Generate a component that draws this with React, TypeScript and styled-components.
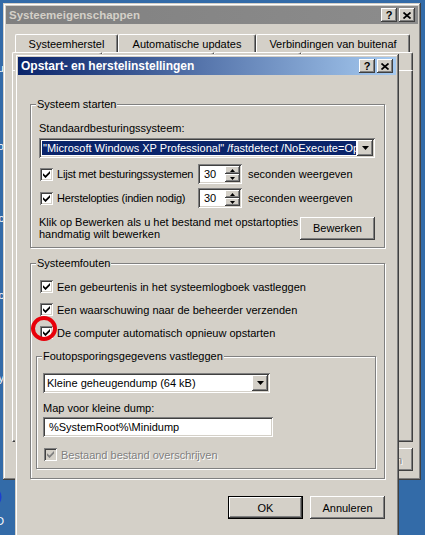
import styled, { createGlobalStyle } from "styled-components";

const FACE = "#d4d0c8";
const SHADOW = "#808080";
const DARK = "#404040";
const NAVY = "#0a246a";

const raised = `
  box-shadow: inset -1px -1px ${DARK}, inset 1px 1px #fff,
    inset -2px -2px ${SHADOW}, inset 2px 2px ${FACE};
`;

const sunken = `
  box-shadow: inset 1px 1px ${SHADOW}, inset -1px -1px #fff,
    inset 2px 2px ${DARK}, inset -2px -2px ${FACE};
`;

const GlobalStyle = createGlobalStyle`
  html, body {
    margin: 0;
    padding: 0;
    background: #336ba8;
  }
  body {
    font-family: "Liberation Sans", Arial, sans-serif;
    font-size: 11px;
    color: #000;
  }
  * {
    box-sizing: border-box;
  }
`;

const Desktop = styled.div`
  position: relative;
  width: 425px;
  height: 535px;
  overflow: hidden;
  background: #336ba8;
`;

// bits of desktop icon captions peeking out at the left edge
const DesktopLabel = styled.span<{ $top: number }>`
  position: absolute;
  right: 421px;
  top: ${(p) => p.$top}px;
  color: #fff;
  white-space: nowrap;
  line-height: 13px;
`;

const DesktopIcon = styled.svg`
  position: absolute;
  left: -21px;
  top: 485px;
`;

const Window = styled.div<{ $x: number; $y: number; $w: number; $h: number }>`
  position: absolute;
  left: ${(p) => p.$x}px;
  top: ${(p) => p.$y}px;
  width: ${(p) => p.$w}px;
  height: ${(p) => p.$h}px;
  display: flex;
  flex-direction: column;
  padding: 3px;
  background: ${FACE};
  box-shadow: inset -1px -1px ${DARK}, inset 1px 1px ${FACE},
    inset -2px -2px ${SHADOW}, inset 2px 2px #fff;
`;

const TitleBar = styled.div<{ $active?: boolean }>`
  height: 18px;
  flex: none;
  display: flex;
  align-items: center;
  justify-content: space-between;
  padding: 0 3px 0 3px;
  background: ${(p) =>
    p.$active
      ? `linear-gradient(to right, ${NAVY}, #a6caf0)`
      : "linear-gradient(to right, #808080, #8c8c8c)"};
  color: ${(p) => (p.$active ? "#fff" : FACE)};
  font-size: ${(p) => (p.$active ? 12 : 11.5)}px;
  font-weight: bold;
  white-space: nowrap;
`;

const CaptionButtons = styled.div`
  display: flex;
  gap: 2px;
`;

const CaptionButton = styled.span`
  width: 16px;
  height: 14px;
  display: flex;
  align-items: center;
  justify-content: center;
  background: ${FACE};
  ${raised}
  color: #000;
  font-size: 11px;
  font-weight: bold;
  line-height: 14px;
`;

/* ---------- property sheet behind ---------- */

const SheetBody = styled.div`
  flex: 1;
  display: flex;
  flex-direction: column;
  padding: 10px 5px 6px 6px;
`;

const TabRow = styled.div<{ $indent: number }>`
  display: flex;
  height: 18px;
  flex: none;
  padding-left: ${(p) => p.$indent}px;
`;

const Tab = styled.div<{ $w: number }>`
  width: ${(p) => p.$w}px;
  flex: none;
  display: flex;
  align-items: center;
  justify-content: center;
  padding-top: 1px;
  border-left: 1px solid #fff;
  border-top: 1px solid #fff;
  border-right: 1px solid ${DARK};
  border-radius: 2px 2px 0 0;
  box-shadow: inset -1px 0 ${SHADOW};
  white-space: nowrap;
`;

const TabPanel = styled.div`
  flex: 1;
  border-left: 1px solid #fff;
  border-top: 1px solid #fff;
  border-right: 1px solid ${DARK};
  border-bottom: 1px solid ${DARK};
  box-shadow: inset -1px -1px ${SHADOW};
`;

const ButtonRow = styled.div<{ $mt: number; $gap: number }>`
  display: flex;
  justify-content: flex-end;
  gap: ${(p) => p.$gap}px;
  margin-top: ${(p) => p.$mt}px;
  flex: none;
`;

const PushButton = styled.button<{ $default?: boolean; $disabled?: boolean }>`
  width: 75px;
  height: 23px;
  flex: none;
  padding: 0;
  font: inherit;
  background: ${FACE};
  color: ${(p) => (p.$disabled ? SHADOW : "#000")};
  text-shadow: ${(p) => (p.$disabled ? "1px 1px #fff" : "none")};
  border: ${(p) => (p.$default ? "1px solid #000" : "none")};
  ${(p) =>
    p.$default
      ? `box-shadow: inset -1px -1px ${DARK}, inset 1px 1px #fff, inset -2px -2px ${SHADOW};`
      : raised}
`;

/* ---------- dialog ---------- */

const DialogBody = styled.div`
  flex: 1;
  display: flex;
  flex-direction: column;
  padding: 0 11px 0 12px;
`;

const Group = styled.fieldset<{ $mt: number }>`
  margin: ${(p) => p.$mt}px 0 0;
  padding: 0;
  min-width: 0;
  border: 1px solid ${SHADOW};
  box-shadow: inset 1px 1px #fff, 1px 1px #fff;
`;

const GroupLabel = styled.legend`
  margin-left: 5px;
  padding: 0 1px;
  line-height: 13px;
  background: ${FACE};
`;

const GroupInner = styled.div<{ $pad: string }>`
  display: flex;
  flex-direction: column;
  padding: ${(p) => p.$pad};
`;

const FieldLabel = styled.div<{ $mt?: number }>`
  line-height: 13px;
  margin-top: ${(p) => p.$mt ?? 0}px;
  white-space: nowrap;
`;

const ComboBox = styled.div<{ $w: number; $mt?: number }>`
  width: ${(p) => p.$w}px;
  height: 20px;
  margin-top: ${(p) => p.$mt ?? 0}px;
  display: flex;
  align-items: center;
  padding: 2px;
  background: #fff;
  ${sunken}
`;

const ComboText = styled.div<{ $selected?: boolean }>`
  flex: 1;
  min-width: 0;
  height: 14px;
  margin: 1px;
  padding-left: 1px;
  line-height: 14px;
  white-space: nowrap;
  overflow: hidden;
  background: ${(p) => (p.$selected ? NAVY : "transparent")};
  color: ${(p) => (p.$selected ? "#fff" : "#000")};
`;

const DropButton = styled.span`
  width: 16px;
  height: 16px;
  flex: none;
  display: flex;
  align-items: center;
  justify-content: center;
  background: ${FACE};
  ${raised}
`;

const TextBox = styled.div<{ $w: number; $mt?: number }>`
  width: ${(p) => p.$w}px;
  height: 20px;
  margin-top: ${(p) => p.$mt ?? 0}px;
  padding: 0 6px;
  line-height: 20px;
  background: #fff;
  white-space: nowrap;
  ${sunken}
`;

const TimerGrid = styled.div`
  display: grid;
  grid-template-columns: 159px 44px auto;
  row-gap: 4px;
  align-items: center;
  margin-top: 6px;
`;

const SpinBox = styled.div`
  width: 44px;
  height: 20px;
  display: flex;
  padding: 2px;
  background: #fff;
  ${sunken}
`;

const SpinValue = styled.span`
  flex: 1;
  padding-left: 4px;
  line-height: 16px;
`;

const SpinButtons = styled.div`
  width: 15px;
  display: flex;
  flex-direction: column;
`;

const SpinButton = styled.span`
  flex: 1;
  display: flex;
  align-items: center;
  justify-content: center;
  background: ${FACE};
  ${raised}
`;

const After = styled.span`
  margin-left: 6px;
  white-space: nowrap;
`;

const CheckList = styled.div<{ $ml: number; $pt: number }>`
  display: flex;
  flex-direction: column;
  gap: 10px;
  margin-left: ${(p) => p.$ml}px;
  padding-top: ${(p) => p.$pt}px;
`;

const CheckRow = styled.label<{ $mt?: number; $disabled?: boolean; $tight?: boolean }>`
  display: flex;
  align-items: center;
  gap: 4px;
  height: 13px;
  padding-left: 1px;
  margin-top: ${(p) => p.$mt ?? 0}px;
  white-space: nowrap;
  letter-spacing: ${(p) => (p.$tight ? "-0.2px" : "normal")};
  color: ${(p) => (p.$disabled ? SHADOW : "#000")};
  text-shadow: ${(p) => (p.$disabled ? "1px 1px #fff" : "none")};
`;

const CheckBox = styled.span<{ $disabled?: boolean }>`
  position: relative;
  width: 13px;
  height: 13px;
  flex: none;
  display: flex;
  align-items: center;
  justify-content: center;
  background: ${(p) => (p.$disabled ? FACE : "#fff")};
  ${sunken}
`;

// hand-drawn red marker around the checkbox
const Ring = styled.span`
  position: absolute;
  left: -9px;
  top: -10px;
  width: 26px;
  height: 25px;
  border: 4px solid #e8000a;
  border-radius: 50%;
`;

const EditRow = styled.div`
  display: flex;
  align-items: center;
  justify-content: space-between;
  margin-top: 8px;
`;

const Hint = styled.div`
  line-height: 12px;
`;

function CloseGlyph() {
  return (
    <svg width="8" height="7" viewBox="0 0 8 7">
      <path d="M0.5 0.5 L7.5 6.5 M7.5 0.5 L0.5 6.5" stroke="#000" strokeWidth="1.7" />
    </svg>
  );
}

function Caption({ title, active }: { title: string; active?: boolean }) {
  return (
    <TitleBar $active={active}>
      <span>{title}</span>
      <CaptionButtons>
        <CaptionButton>?</CaptionButton>
        <CaptionButton>
          <CloseGlyph />
        </CaptionButton>
      </CaptionButtons>
    </TitleBar>
  );
}

function Check({ disabled }: { disabled?: boolean }) {
  return (
    <svg width="7" height="7" viewBox="0 0 7 7">
      <polygon points="0,2.2 2.5,4.6 7,0.1 7,2.6 2.5,7.1 0,4.6" fill={disabled ? SHADOW : "#000"} />
    </svg>
  );
}

function DownArrow() {
  return (
    <svg width="7" height="4" viewBox="0 0 7 4">
      <polygon points="0,0 7,0 3.5,4" fill="#000" />
    </svg>
  );
}

function Spin({ value }: { value: string }) {
  return (
    <SpinBox>
      <SpinValue>{value}</SpinValue>
      <SpinButtons>
        <SpinButton>
          <svg width="5" height="3" viewBox="0 0 5 3">
            <polygon points="0,3 5,3 2.5,0" fill="#000" />
          </svg>
        </SpinButton>
        <SpinButton>
          <svg width="5" height="3" viewBox="0 0 5 3">
            <polygon points="0,0 5,0 2.5,3" fill="#000" />
          </svg>
        </SpinButton>
      </SpinButtons>
    </SpinBox>
  );
}

export default function App() {
  return (
    <Desktop>
      <GlobalStyle />
      <DesktopLabel $top={62}>Menu</DesktopLabel>
      <DesktopLabel $top={140}>Deco</DesktopLabel>
      <DesktopLabel $top={212}>Doc</DesktopLabel>
      <DesktopLabel $top={289}>Muzc</DesktopLabel>
      <DesktopLabel $top={372}>Spy</DesktopLabel>
      <DesktopLabel $top={515}>GO</DesktopLabel>
      <DesktopIcon width="24" height="24" viewBox="0 0 24 24">
        <circle cx="12" cy="12" r="9" fill="none" stroke="#1d3fcf" strokeWidth="3" />
      </DesktopIcon>

      <Window $x={3} $y={3} $w={418} $h={477}>
        <Caption title="Systeemeigenschappen" />
        <SheetBody>
          <TabRow $indent={3}>
            <Tab $w={103}>Systeemherstel</Tab>
            <Tab $w={138}>Automatische updates</Tab>
            <Tab $w={154}>Verbindingen van buitenaf</Tab>
          </TabRow>
          {/* second tab row, hidden behind the dialog */}
          <TabRow $indent={0}>
            <Tab $w={90} />
            <Tab $w={112} />
            <Tab $w={87} />
            <Tab $w={112} />
          </TabRow>
          <TabPanel />
          <ButtonRow $mt={6} $gap={6}>
            <PushButton />
            <PushButton />
            <PushButton $disabled>Toepassen</PushButton>
          </ButtonRow>
        </SheetBody>
      </Window>

      <Window $x={15} $y={54} $w={384} $h={495}>
        <Caption title="Opstart- en herstelinstellingen" active />
        <DialogBody>
          <Group $mt={23}>
            <GroupLabel>Systeem starten</GroupLabel>
            <GroupInner $pad="11px 9px 7px 8px">
              <FieldLabel>Standaardbesturingssysteem:</FieldLabel>
              <ComboBox $w={336} $mt={3}>
                <ComboText $selected>
                  {'"Microsoft Windows XP Professional" /fastdetect /NoExecute=OptIn'}
                </ComboText>
                <DropButton>
                  <DownArrow />
                </DropButton>
              </ComboBox>
              <TimerGrid>
                <CheckRow $tight>
                  <CheckBox>
                    <Check />
                  </CheckBox>
                  Lijst met besturingssystemen
                </CheckRow>
                <Spin value="30" />
                <After>seconden weergeven</After>
                <CheckRow $tight>
                  <CheckBox>
                    <Check />
                  </CheckBox>
                  Herstelopties (indien nodig)
                </CheckRow>
                <Spin value="30" />
                <After>seconden weergeven</After>
              </TimerGrid>
              <EditRow>
                <Hint>
                  Klik op Bewerken als u het bestand met opstartopties
                  <br />
                  handmatig wilt bewerken
                </Hint>
                <PushButton>Bewerken</PushButton>
              </EditRow>
            </GroupInner>
          </Group>

          <Group $mt={9}>
            <GroupLabel>Systeemfouten</GroupLabel>
            <GroupInner $pad="0 8px 9px 5px">
              <CheckList $ml={3} $pt={10}>
                <CheckRow>
                  <CheckBox>
                    <Check />
                  </CheckBox>
                  Een gebeurtenis in het systeemlogboek vastleggen
                </CheckRow>
                <CheckRow>
                  <CheckBox>
                    <Check />
                  </CheckBox>
                  Een waarschuwing naar de beheerder verzenden
                </CheckRow>
                <CheckRow>
                  <CheckBox>
                    <Check />
                    <Ring />
                  </CheckBox>
                  De computer automatisch opnieuw opstarten
                </CheckRow>
              </CheckList>

              <Group $mt={11}>
                <GroupLabel>Foutopsporingsgegevens vastleggen</GroupLabel>
                <GroupInner $pad="10px 6px 7px 6px">
                  <ComboBox $w={227}>
                    <ComboText>Kleine geheugendump (64 kB)</ComboText>
                    <DropButton>
                      <DownArrow />
                    </DropButton>
                  </ComboBox>
                  <FieldLabel $mt={9}>Map voor kleine dump:</FieldLabel>
                  <TextBox $w={230} $mt={2}>
                    {"%SystemRoot%\\Minidump"}
                  </TextBox>
                  <CheckRow $mt={11} $disabled>
                    <CheckBox $disabled>
                      <Check disabled />
                    </CheckBox>
                    Bestaand bestand overschrijven
                  </CheckRow>
                </GroupInner>
              </Group>
            </GroupInner>
          </Group>

          <ButtonRow $mt={17} $gap={7}>
            <PushButton $default>OK</PushButton>
            <PushButton>Annuleren</PushButton>
          </ButtonRow>
        </DialogBody>
      </Window>
    </Desktop>
  );
}
